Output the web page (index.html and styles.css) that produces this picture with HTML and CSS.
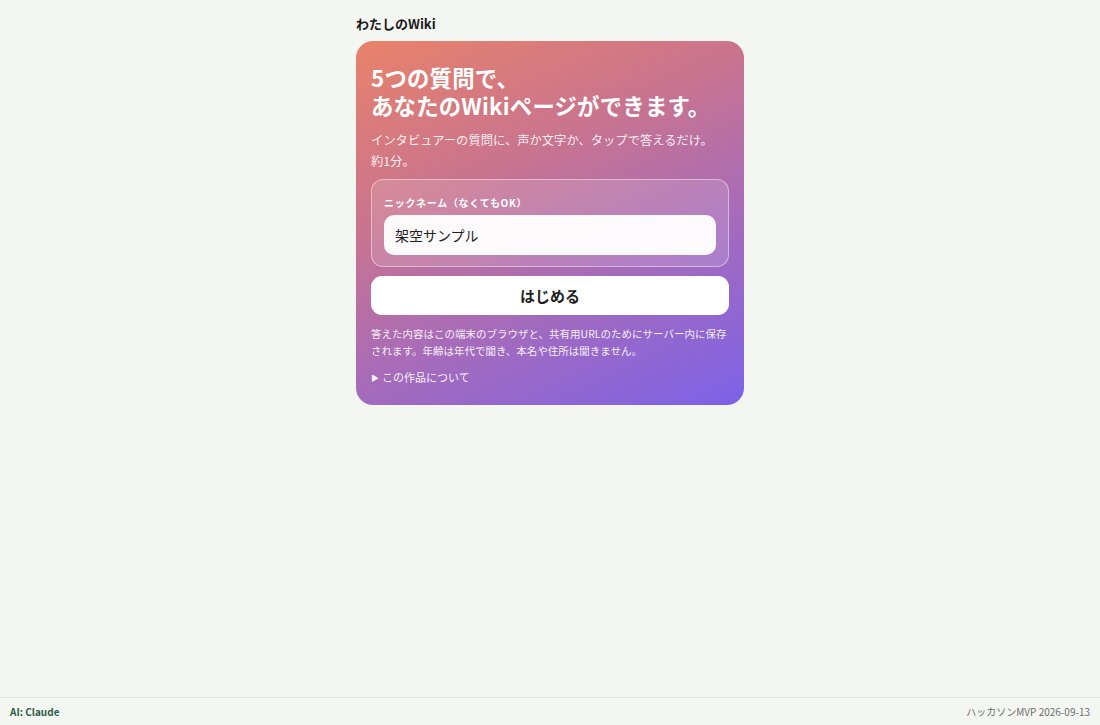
FILE: index.html
```html
<!DOCTYPE html>
<html lang="ja">
<head>
<meta charset="utf-8">
<title>わたしのWiki</title>
<link rel="stylesheet" href="styles.css">
</head>
<body>
<div class="page">
  <main class="main">
    <div class="wrap">
      <h1 class="brand">わたしのWiki</h1>
      <section class="card">
        <h2 class="title"><span class="tline">5つの質問で、</span><span class="tline">あなたのWikiページができます。</span></h2>
        <p class="lead">インタビュアーの質問に、声か文字か、タップで答えるだけ。<br>約1分。</p>
        <div class="field">
          <label class="label">ニックネーム（なくてもOK）</label>
          <div class="input">架空サンプル</div>
        </div>
        <button class="start">はじめる</button>
        <p class="note">答えた内容はこの端末のブラウザと、共有用URLのためにサーバー内に保存されます。年齢は年代で聞き、本名や住所は聞きません。</p>
        <div class="about"><span class="tri">▶</span>この作品について</div>
      </section>
    </div>
  </main>
  <footer class="footer">
    <span class="ai">AI: Claude</span>
    <span class="meta">ハッカソンMVP 2026-09-13</span>
  </footer>
</div>
</body>
</html>
```
FILE: styles.css
```css
* { box-sizing: border-box; }
html, body { margin: 0; padding: 0; }
body {
  background: #f4f6f2;
  font-family: "Noto Sans CJK JP", "Noto Sans", sans-serif;
  color: #1d1d1d;
}
.page {
  min-height: 100vh;
  display: flex;
  flex-direction: column;
}
.main { flex: 1; }
.wrap {
  width: 388px;
  margin: 0 auto;
  padding-top: 14px;
}
.brand {
  margin: 0 0 7px;
  font-size: 13px;
  font-weight: 700;
  line-height: 20px;
  color: #1b1b1b;
}
.card {
  border-radius: 17px;
  padding: 22px 15px 19px;
  background: linear-gradient(155deg, #e8826a 0%, #c9748f 35%, #a56bbb 65%, #7c62e8 100%);
  color: #fff;
}
.title {
  margin: 0;
  font-size: 22.4px;
  font-weight: 700;
  line-height: 28px;
  letter-spacing: 0.2px;
}
.tline {
  display: block;
  height: 28px;
}
.lead {
  margin: 11px 0 7px;
  font-size: 12.3px;
  line-height: 21px;
  color: rgba(255,255,255,0.9);
  white-space: nowrap;
}
.field {
  border: 1px solid rgba(255,255,255,0.45);
  background: rgba(255,255,255,0.14);
  border-radius: 12px;
  padding: 16px 12px 11px;
}
.label {
  display: block;
  font-size: 10px;
  font-weight: 700;
  letter-spacing: 0.7px;
  line-height: 14px;
  margin-bottom: 5px;
}
.input {
  height: 40px;
  border-radius: 10px;
  background: rgba(255,255,255,0.96);
  color: #222;
  font-size: 14px;
  line-height: 40px;
  padding: 0 11px;
}
.start {
  display: block;
  width: 100%;
  margin-top: 9px;
  height: 39px;
  border: none;
  border-radius: 11px;
  background: #fff;
  color: #1f1f1f;
  font-family: inherit;
  font-size: 15px;
  font-weight: 700;
}
.note {
  margin: 10px 0 0;
  font-size: 10.5px;
  line-height: 17px;
  color: rgba(255,255,255,0.92);
}
.about {
  margin-top: 10px;
  font-size: 11px;
  line-height: 17px;
  color: rgba(255,255,255,0.95);
}
.tri { font-size: 8px; margin-right: 3px; vertical-align: 1px; }
.footer {
  height: 28px;
  border-top: 1px solid #e3e6e0;
  display: flex;
  justify-content: space-between;
  align-items: center;
  padding: 0 10px;
  font-size: 10px;
}
.ai { color: #2d5e49; font-weight: 700; }
.meta { color: #6f6f6f; }
```
